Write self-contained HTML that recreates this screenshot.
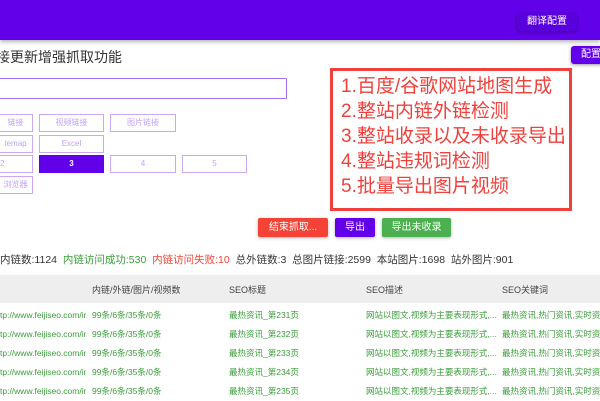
<!DOCTYPE html>
<html><head><meta charset="utf-8"><style>
*{margin:0;padding:0;box-sizing:border-box}
body{width:600px;height:400px;overflow:hidden;background:#fff;font-family:"Liberation Sans","Noto Sans CJK SC",sans-serif;position:relative}
.a{position:absolute;white-space:nowrap}
.hdr{left:0;top:0;width:600px;height:40px;background:#6200ea;box-shadow:0 2px 4px rgba(0,0,0,.3)}
.hb{background:#5a00dc;color:#fff;font-size:10px;border-radius:3px;box-shadow:0 1px 3px rgba(0,0,0,.4);text-align:center;line-height:18px}
.ob{border:1px solid #c9a8f5;color:#c3a3f0;font-size:8px;text-align:center;height:18px;line-height:16px;background:#fff}
.sel{background:#6200ea;color:#fff;border-color:#6200ea;font-weight:bold}
.btn{color:#fff;font-size:10px;text-align:center;height:19px;line-height:19px;border-radius:2px;box-shadow:0 1px 3px rgba(0,0,0,.3)}
.box{left:330px;top:68px;width:242px;height:143px;border:3px solid #f0403c}
.box div{color:#f0403c;font-size:19px;line-height:25px;padding-left:8px;margin-top:0}
.g{color:#3a9d3a;font-size:8.5px;line-height:19px}
</style></head><body>
<div class="a hdr"></div>
<div class="a hb" style="left:517px;top:13px;width:60px">翻译配置</div>
<div class="a hb" style="left:590px;top:13px;width:20px"></div>
<div class="a hb" style="left:571px;top:46px;width:40px;background:#6200ea">配置</div>
<div class="a" style="left:-4px;top:47px;font-size:14px;color:#333">接更新增强抓取功能</div>
<div class="a" style="left:-2px;top:78px;width:289px;height:21px;border:1px solid #a470f0;border-radius:1px"></div>
<div class="a ob" style="left:-2px;top:114px;width:35px">链接</div>
<div class="a ob" style="left:39px;top:114px;width:65px">视频链接</div>
<div class="a ob" style="left:110px;top:114px;width:66px">图片链接</div>
<div class="a ob" style="left:-2px;top:135px;width:35px">temap</div>
<div class="a ob" style="left:39px;top:135px;width:65px">Excel</div>
<div class="a ob" style="left:-2px;top:155px;width:35px;text-align:left;padding-left:1px">2</div>
<div class="a ob sel" style="left:39px;top:155px;width:65px">3</div>
<div class="a ob" style="left:110px;top:155px;width:66px">4</div>
<div class="a ob" style="left:182px;top:155px;width:65px">5</div>
<div class="a ob" style="left:-2px;top:176px;width:35px">浏览器</div>
<div class="a box"><div style="margin-top:3px">1.百度/谷歌网站地图生成</div><div>2.整站内链外链检测</div><div>3.整站收录以及未收录导出</div><div>4.整站违规词检测</div><div>5.批量导出图片视频</div></div>
<div class="a btn" style="left:258px;top:218px;width:70px;background:#f44336">结束抓取...</div>
<div class="a btn" style="left:335px;top:218px;width:40px;background:#6200ea">导出</div>
<div class="a btn" style="left:382px;top:218px;width:69px;background:#4caf50">导出未收录</div>
<div class="a" style="left:0;top:252px;font-size:10.5px;color:#333">内链数:1124&nbsp; <span style="color:#3a9d3a">内链访问成功:530</span>&nbsp; <span style="color:#f44336">内链访问失败:10</span>&nbsp; 总外链数:3&nbsp; 总图片链接:2599&nbsp; 本站图片:1698&nbsp; 站外图片:901</div>
<div class="a" style="left:0;top:275px;width:600px;height:28px;background:#eeeeee"></div>
<div class="a" style="left:92px;top:283px;font-size:9px;color:#444">内链/外链/图片/视频数</div>
<div class="a" style="left:229px;top:283px;font-size:9px;color:#444">SEO标题</div>
<div class="a" style="left:366px;top:283px;font-size:9px;color:#444">SEO描述</div>
<div class="a" style="left:502px;top:283px;font-size:9px;color:#444">SEO关键词</div>
<div class="a" style="left:0;top:306px;width:600px">
<div style="position:relative;height:19px" class="g"><span class="a" style="left:0;width:86px;overflow:hidden">tp://www.feijiseo.com/index</span><span class="a" style="left:92px">99条/6条/35条/0条</span><span class="a" style="left:229px">最热资讯_第231页</span><span class="a" style="left:366px">网站以图文,视频为主要表现形式,...</span><span class="a" style="left:502px">最热资讯,热门资讯,实时资讯</span></div>
<div style="position:relative;height:19px" class="g"><span class="a" style="left:0;width:86px;overflow:hidden">tp://www.feijiseo.com/index</span><span class="a" style="left:92px">99条/6条/35条/0条</span><span class="a" style="left:229px">最热资讯_第232页</span><span class="a" style="left:366px">网站以图文,视频为主要表现形式,...</span><span class="a" style="left:502px">最热资讯,热门资讯,实时资讯</span></div>
<div style="position:relative;height:19px" class="g"><span class="a" style="left:0;width:86px;overflow:hidden">tp://www.feijiseo.com/index</span><span class="a" style="left:92px">99条/6条/35条/0条</span><span class="a" style="left:229px">最热资讯_第233页</span><span class="a" style="left:366px">网站以图文,视频为主要表现形式,...</span><span class="a" style="left:502px">最热资讯,热门资讯,实时资讯</span></div>
<div style="position:relative;height:19px" class="g"><span class="a" style="left:0;width:86px;overflow:hidden">tp://www.feijiseo.com/index</span><span class="a" style="left:92px">99条/6条/35条/0条</span><span class="a" style="left:229px">最热资讯_第234页</span><span class="a" style="left:366px">网站以图文,视频为主要表现形式,...</span><span class="a" style="left:502px">最热资讯,热门资讯,实时资讯</span></div>
<div style="position:relative;height:19px" class="g"><span class="a" style="left:0;width:86px;overflow:hidden">tp://www.feijiseo.com/index</span><span class="a" style="left:92px">99条/6条/35条/0条</span><span class="a" style="left:229px">最热资讯_第235页</span><span class="a" style="left:366px">网站以图文,视频为主要表现形式,...</span><span class="a" style="left:502px">最热资讯,热门资讯,实时资讯</span></div>
</div>
</body></html>
